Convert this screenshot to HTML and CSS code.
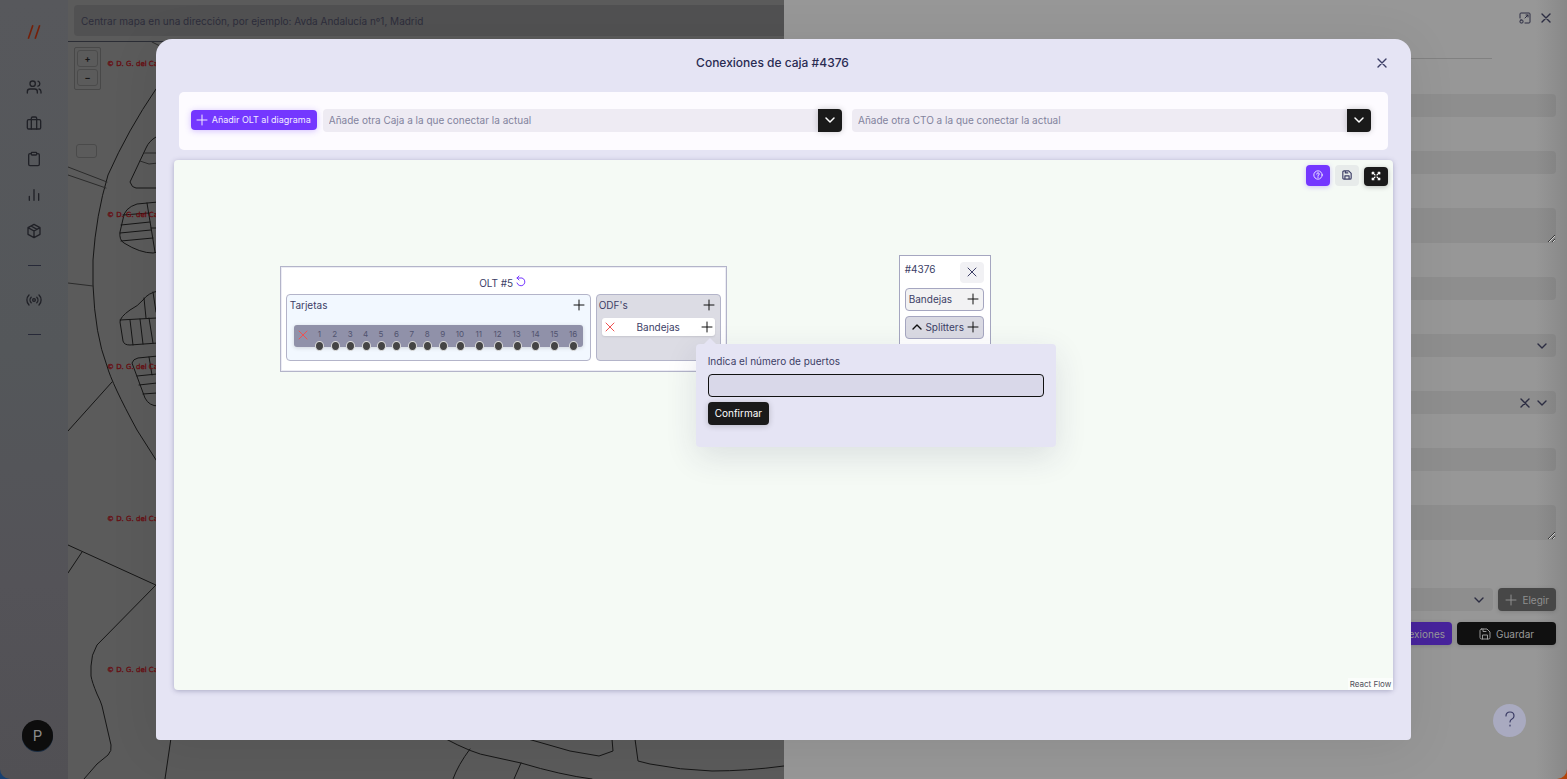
FILE: index.html
```html
<!DOCTYPE html>
<html lang="es">
<head>
<meta charset="utf-8">
<meta name="viewport" content="width=device-width, initial-scale=1">
<title>Conexiones de caja #4376</title>
<link rel="stylesheet" href="styles.css">
</head>
<body>
<svg class="sprite" aria-hidden="true">
  <symbol id="plus" viewBox="0 0 12 12"><path d="M6 1v10M1 6h10"/></symbol>
  <symbol id="cross" viewBox="0 0 12 12"><path d="M2 2l8 8M10 2l-8 8"/></symbol>
  <symbol id="down" viewBox="0 0 12 12"><path d="M2 4l4 4 4-4"/></symbol>
  <symbol id="up" viewBox="0 0 12 12"><path d="M2 8l4-4 4 4"/></symbol>
  <symbol id="save" viewBox="0 0 12 12"><path d="M2.500 1h5.500L11 4v5.500Q11 11 9.500 11h-7Q1 11 1 9.500v-7Q1 1 2.500 1zM3.500 11V7h5v4M4 1v2.500h3"/></symbol>
</svg>

<div class="app">
  <nav class="sidebar" aria-label="Principal">
    <a class="logo" href="#" aria-label="Inicio"><svg viewBox="0 0 14 14"><path d="M6 1L2 13M12 1L8 13"/></svg></a>
    <a class="nav-link" href="#" aria-label="Clientes"><svg viewBox="0 0 24 24"><circle cx="10" cy="7" r="4"/><path d="M2 21v-2q0-4 4-4h7q4 0 4 4v2M18 3.200a4 4 0 0 1 0 7.600M22.500 21v-2q0-3-3-4"/></svg></a>
    <a class="nav-link" href="#" aria-label="Trabajos"><svg viewBox="0 0 24 24"><rect x="2" y="7" width="20" height="14" rx="2"/><path d="M8 21V5q0-2 2-2h4q2 0 2 2v16"/></svg></a>
    <a class="nav-link" href="#" aria-label="Tareas"><svg viewBox="0 0 24 24"><path d="M8 4H6Q4 4 4 6v14q0 2 2 2h12q2 0 2-2V6q0-2-2-2h-2"/><rect x="8" y="2" width="8" height="4" rx="1"/></svg></a>
    <a class="nav-link" href="#" aria-label="Estadísticas"><svg viewBox="0 0 24 24"><path d="M5 20v-6M12 20V4M19 20V10"/></svg></a>
    <a class="nav-link" href="#" aria-label="Almacén"><svg viewBox="0 0 24 24"><path d="M12 2l9 5v10l-9 5-9-5V7zM3 7l9 5 9-5M12 12v10M7.500 4.500l9 5"/></svg></a>
    <hr class="nav-rule">
    <a class="nav-link" href="#" aria-label="Red"><svg viewBox="0 0 24 24"><circle cx="12" cy="12" r="2"/><path d="M16.200 7.800a6 6 0 0 1 0 8.400M7.800 16.200a6 6 0 0 1 0-8.400M19.500 4.500a10.500 10.500 0 0 1 0 15M4.500 19.500a10.500 10.500 0 0 1 0-15"/></svg></a>
    <hr class="nav-rule">
    <button class="avatar" type="button">P</button>
  </nav>

  <section class="map">
    <div class="map-search"><input class="map-input" type="text" aria-label="Centrar mapa" placeholder="Centrar mapa en una dirección, por ejemplo: Avda Andalucía nº1, Madrid"></div>
    <div class="map-view">
      <svg class="map-art" viewBox="68 42 716 737" preserveAspectRatio="xMinYMin slice" aria-hidden="true">
        <g class="roads">
          <path d="M156 89Q128 130 108 175Q96 215 93 260V285Q95 335 107 366Q112 384 137 430L158 463"/>
          <path class="faint" d="M68 167l39 15M68 175l38 13M68 283l25 3M152 42l8 4"/>
          <path d="M156 137Q149 141 146 148L130 182Q132 188 136 188H158"/>
          <path class="faint" d="M144 153h14M140 161l9 3 9-1"/>
          <path d="M158 202L137 204Q124 208 123 219L120 232Q119 240 124 243Q140 253 153 253L158 252M147 203l8 49M121 225l29-3M120 233l31-3M121 241l32-3M123 215l26-2M151 228h6"/>
          <path d="M158 291Q148 293 143 300Q138 306 130 310Q120 317 120 322L123 341Q124 345 130 345L158 343M120 320l37-2M130 320l3 25M140 319l3 25M149 318l4 25M144 298l2 20M153 292l3 20"/>
          <path d="M158 356L138 358Q133 359 132 363L145 398Q149 406 158 406M137 376l20-2M139 385l18-2M143 394l14-1M149 357l3 18M112 382L68 431"/>
          <path d="M68 545l90 41M82 552L68 573M157 584L97 645Q91 655 91 666v10Q92 682 97 694q4 8 5 12l9 39q1 6-3 10l-11 9-13 15M171 738l-6 41"/>
          <path d="M444 738q30 16 45 18l32 7q40 12 71 16M470 749q-12 16-17 30M521 763l-7 16M528 739l42 12 29 5 14-5-1-12M635 739l3 22 12 3q30 6 62 7 35 0 72-5"/>
        </g>
        <g class="marks">
          <text x="107" y="66">© D. G. del Catastro</text>
          <text x="107" y="217">© D. G. del Catastro</text>
          <text x="107" y="369">© D. G. del Catastro</text>
          <text x="107" y="521">© D. G. del Catastro</text>
          <text x="107" y="672">© D. G. del Catastro</text>
        </g>
      </svg>
      <div class="zoom-box">
        <button class="zoom-btn" type="button" aria-label="Acercar">+</button>
        <button class="zoom-btn" type="button" aria-label="Alejar">−</button>
      </div>
      <div class="map-chip"></div>
    </div>
  </section>

  <aside class="drawer">
    <div class="drawer-head">
      <button class="icon-btn" type="button" aria-label="Expandir"><svg class="i12" viewBox="0 0 12 12"><path d="M1 6V2q0-1 1-1h8q1 0 1 1v8q0 1-1 1H6M7 3h2v2M9 3L6 6"/><rect x="1" y="8" width="3" height="3" rx="1"/></svg></button>
      <button class="icon-btn" type="button" aria-label="Cerrar panel"><svg class="i12 medium"><use href="#cross"/></svg></button>
    </div>
    <hr class="drawer-rule">
    <form class="drawer-form">
      <input class="dfield" aria-label="Nombre">
      <input class="dfield" aria-label="Dirección">
      <textarea class="dfield dfield-area" aria-label="Descripción"></textarea>
      <input class="dfield" aria-label="Referencia">
      <div class="pick"><select class="dfield" aria-label="Tipo"></select><span class="pick-icons"><svg class="i12 medium"><use href="#down"/></svg></span></div>
      <div class="pick"><select class="dfield" aria-label="Estado"></select><span class="pick-icons"><svg class="i12 medium"><use href="#cross"/></svg><svg class="i12 medium"><use href="#down"/></svg></span></div>
      <input class="dfield" aria-label="Etiqueta">
      <textarea class="dfield dfield-area" aria-label="Notas"></textarea>
      <div class="drawer-actions">
        <div class="pick-row">
          <div class="pick"><select class="dfield" aria-label="Elemento"></select><span class="pick-icons"><svg class="i12 medium"><use href="#down"/></svg></span></div>
          <button class="btn btn-grey" type="button"><svg class="i12"><use href="#plus"/></svg>Elegir</button>
        </div>
        <div class="save-row">
          <button class="btn btn-violet-dim" type="button">Conexiones</button>
          <button class="btn btn-save" type="button"><svg class="i12"><use href="#save"/></svg>Guardar</button>
        </div>
      </div>
    </form>
  </aside>
</div>

<button class="help" type="button" aria-label="Ayuda"><svg viewBox="0 0 12 16"><path d="M2 5Q2 1 6 1t4 4q0 2-2 3T6 11M6 14v1"/></svg></button>

<div class="modal" role="dialog" aria-labelledby="modal-title">
  <header class="modal-head">
    <h1 class="modal-title" id="modal-title">Conexiones de caja #4376</h1>
    <button class="icon-btn modal-close" type="button" aria-label="Cerrar"><svg class="i12 medium"><use href="#cross"/></svg></button>
  </header>

  <div class="toolbar">
    <button class="btn-olt" type="button"><svg class="i12"><use href="#plus"/></svg>Añadir OLT al diagrama</button>
    <div class="combo">
      <input class="combo-input" type="text" aria-label="Caja" placeholder="Añade otra Caja a la que conectar la actual">
      <button class="combo-btn" type="button" aria-label="Ver cajas"><svg class="i12"><use href="#down"/></svg></button>
    </div>
    <div class="combo">
      <input class="combo-input" type="text" aria-label="CTO" placeholder="Añade otra CTO a la que conectar la actual">
      <button class="combo-btn" type="button" aria-label="Ver CTO"><svg class="i12"><use href="#down"/></svg></button>
    </div>
  </div>

  <div class="canvas">
    <div class="canvas-tools">
      <button class="tool tool-help" type="button" aria-label="Ayuda del diagrama"><svg class="i10" viewBox="0 0 12 12"><circle cx="6" cy="6" r="5"/><path d="M4.500 5Q4.500 3.300 6 3.300T7.500 5Q7.500 6 6 6.500v.6M6 8.300v.7"/></svg></button>
      <button class="tool tool-save" type="button" aria-label="Guardar diagrama"><svg class="i10 medium"><use href="#save"/></svg></button>
      <button class="tool tool-full" type="button" aria-label="Pantalla completa"><svg class="i10 medium" viewBox="0 0 12 12"><path d="M4.800 4.800L2 2M7.200 4.800L10 2M4.800 7.200L2 10M7.200 7.200L10 10M1.500 3.500v-2h2M8.500 1.500h2v2M1.500 8.500v2h2M8.500 10.500h2v-2"/></svg></button>
    </div>

    <section class="node node-olt">
      <h2 class="olt-title">OLT #5 <button class="icon-btn reload" type="button" aria-label="Recargar"><svg class="i12" viewBox="0 0 12 12"><path d="M2 3h5a4 4 0 1 1-5 5M4 1L2 3l2 2"/></svg></button></h2>
      <div class="olt-body">
        <div class="group group-cards">
          <div class="group-head"><span>Tarjetas</span><button class="icon-btn" type="button" aria-label="Añadir tarjeta"><svg class="i12"><use href="#plus"/></svg></button></div>
          <div class="card-strip">
            <button class="icon-btn danger" type="button" aria-label="Quitar tarjeta"><svg class="i12"><use href="#cross"/></svg></button>
            <ol class="ports">
              <li>1</li><li>2</li><li>3</li><li>4</li><li>5</li><li>6</li><li>7</li><li>8</li><li>9</li><li>10</li><li>11</li><li>12</li><li>13</li><li>14</li><li>15</li><li>16</li>
            </ol>
          </div>
        </div>
        <div class="group group-odf">
          <div class="group-head"><span>ODF's</span><button class="icon-btn" type="button" aria-label="Añadir ODF"><svg class="i12"><use href="#plus"/></svg></button></div>
          <div class="tray">
            <button class="icon-btn danger" type="button" aria-label="Quitar ODF"><svg class="i12"><use href="#cross"/></svg></button>
            <span>Bandejas</span>
            <button class="icon-btn" type="button" aria-label="Añadir bandeja"><svg class="i12"><use href="#plus"/></svg></button>
          </div>
        </div>
      </div>
    </section>

    <section class="node node-box">
      <div class="box-head"><span>#4376</span><button class="box-close" type="button" aria-label="Quitar caja"><svg class="i12"><use href="#cross"/></svg></button></div>
      <div class="box-row"><span>Bandejas</span><button class="icon-btn" type="button" aria-label="Añadir bandeja a la caja"><svg class="i12"><use href="#plus"/></svg></button></div>
      <div class="box-row box-row-dark"><button class="icon-btn" type="button" aria-label="Plegar"><svg class="i12 medium"><use href="#up"/></svg></button><span>Splitters</span><button class="icon-btn" type="button" aria-label="Añadir splitter"><svg class="i12"><use href="#plus"/></svg></button></div>
    </section>

    <form class="popover">
      <label class="pop-label" for="ports">Indica el número de puertos</label>
      <input class="pop-input" id="ports" type="text">
      <button class="btn-confirm" type="button">Confirmar</button>
    </form>

    <a class="credit" href="#">React Flow</a>
  </div>
</div>
</body>
</html>
```
FILE: styles.css
```css
* { box-sizing: border-box; }

body {
  margin: 0;
  height: 100vh;
  overflow: hidden;
  background: linear-gradient(90deg, #173f70 50%, #b3440b 50%);
  color: #3c3e66;
  font: 10px/16px Inter, "Open Sans", sans-serif;
}

button, input, select, textarea { font: inherit; color: inherit; border: 0; margin: 0; }
button { padding: 0; background: none; }
input:focus, textarea:focus { outline: none; }
svg { fill: none; stroke: currentColor; stroke-linecap: round; stroke-linejoin: round; flex: none; }
.sprite { position: absolute; width: 0; height: 0; }
.i12 { width: 12px; height: 12px; }
.i10 { width: 10px; height: 10px; }
.medium { stroke-width: 1.400; }
.icon-btn { display: flex; align-items: center; justify-content: center; }

/* App shell */
.app {
  display: grid;
  grid-template-columns: 68px minmax(0, 1fr) 50%;
  height: 100vh;
  border-radius: 0 0 10px 10px;
  overflow: hidden;
}

.sidebar {
  display: flex;
  flex-direction: column;
  align-items: center;
  padding: 24px 0 28px;
  background: linear-gradient(#57585c, #54575a 45%, #545358 75%, #515054);
  color: #202127;
}
.logo { width: 16px; height: 16px; margin-bottom: 29px; color: #751f08; }
.logo svg { display: block; width: 16px; height: 16px; stroke-width: 1.400; stroke-linecap: butt; }
.nav-link { display: flex; align-items: center; height: 36px; color: inherit; }
.nav-link svg { width: 16px; height: 16px; stroke-width: 2; }
.nav-rule { width: 13px; height: 0; margin: 16px 0; border: 0; border-top: 1px solid #272938; }
.avatar {
  width: 31px;
  height: 31px;
  margin: auto 0 0 7px;
  border-radius: 50%;
  background: #0d0d0d;
  box-shadow: 0 1px 0 #1b2d42;
  color: #8b8b8b;
  font-size: 15px;
}

/* Map */
.map { display: flex; flex-direction: column; background: #5b5b5b; }
.map-search { padding: 5px 0 5px 6px; border-bottom: 1px solid #2b2d35; }
.map-input { display: block; width: 100%; height: 31px; padding: 0 7px; border-radius: 4px 0 0 4px; background: #515152; }
.map-input::placeholder { color: #2d2d3b; opacity: 1; }
.map-view { position: relative; flex: 1; overflow: hidden; }
.map-art { position: absolute; top: 0; left: 0; width: 100%; height: 100%; }
.roads path { stroke: #161616; stroke-width: 1; }
.roads .faint { stroke: #2b2b2b; }
.marks text { fill: #680b10; stroke: #680b10; stroke-width: .3; font: 7px "DejaVu Sans", sans-serif; }
.zoom-box {
  position: absolute;
  top: 5px;
  left: 6px;
  display: grid;
  gap: 2px;
  padding: 2px 2px 3px;
  border: 1px solid #484848;
  border-radius: 2px;
}
.zoom-btn { width: 21px; height: 17px; border: 1px solid #4b4b4b; border-radius: 3px; color: #161616; font: bold 9px/13px Inter, sans-serif; }
.map-chip { position: absolute; top: 102px; left: 8px; width: 21px; height: 14px; border: 1px solid #4a4a4a; border-radius: 3px; }

/* Side drawer */
.drawer { padding: 12px 11px; background: linear-gradient(90deg, #979797 96%, #888); color: #2c2d42; }
.drawer-head { display: flex; justify-content: flex-end; gap: 9px; padding: 0 4px; }
.drawer-rule { margin: 34px 64px 35px 0; border: 0; border-top: 1px solid #818181; }
.drawer-form { display: grid; gap: 34px; }
.dfield { display: block; width: 100%; height: 23px; padding: 0 7px; border-radius: 4px; background: rgba(0, 0, 0, .06); appearance: none; }
.dfield-area { height: 35px; }
.pick { position: relative; flex: 1; }
.pick-icons { position: absolute; top: 6px; right: 8px; display: flex; gap: 5px; pointer-events: none; }
.drawer-actions { display: grid; gap: 11px; padding-top: 14px; }
.pick-row, .save-row { display: flex; gap: 5px; justify-content: flex-end; }
.btn { display: flex; align-items: center; justify-content: center; gap: 5px; height: 23px; padding: 0 7px; border-radius: 4px; color: #999; box-shadow: 0 1px 4px rgba(0, 0, 0, .15); }
.btn-grey { background: #474747; color: #8f8f8f; }
.btn-violet-dim { background: #47239c; }
.btn-save { width: 99px; background: #101010; }
.help {
  position: absolute;
  right: 41px;
  bottom: 42px;
  width: 33px;
  height: 33px;
  border-radius: 50%;
  background: #a9aac0;
  color: #3a3b64;
}
.help svg { width: 12px; height: 16px; stroke-width: 1.200; }

/* Modal */
.modal {
  position: absolute;
  inset: 5% calc(10% - 1px);
  display: flex;
  flex-direction: column;
  padding: 0 18px 50px;
  border-radius: 16px 16px 4px 4px;
  background: #e5e4f4;
  box-shadow: 0 6px 50px rgba(0, 0, 0, .08);
}
.modal-head { display: grid; grid-template-columns: 1fr 22px; align-items: center; height: 48px; }
.modal-title { margin: 0; text-align: center; font-size: 12px; font-weight: 500; color: #292b52; }

.toolbar {
  display: flex;
  align-items: center;
  gap: 10px;
  margin: 5px 5px 10px;
  padding: 17px 17px 18px 12px;
  border-radius: 5px;
  background: #fdfbff;
}
.btn-olt {
  display: flex;
  align-items: center;
  gap: 4px;
  height: 20px;
  margin-right: -4px;
  padding: 0 6px 0 5px;
  border-radius: 4px;
  background: #7437ff;
  box-shadow: 0 1px 6px rgba(116, 55, 255, .3);
  color: #f2ecff;
  font-size: 9px;
}
.combo { display: flex; flex: 1; height: 23px; }
.combo-input { flex: 1; min-width: 0; padding: 0 6px; border-radius: 4px 0 0 4px; background: #eeebf3; }
.combo-input::placeholder { color: #82839d; opacity: 1; }
.combo-btn { display: grid; place-items: center; width: 24px; border-radius: 0 4px 4px 0; background: #1a1a1a; color: #fff; box-shadow: 0 0 6px rgba(0, 0, 0, .2); }
.combo-btn svg { stroke-width: 1.500; }

/* Diagram canvas */
.canvas {
  position: relative;
  flex: 1;
  border-radius: 4px;
  background: #f5faf5;
  box-shadow: 0 1px 5px rgba(60, 60, 110, .35);
}
.canvas-tools { position: absolute; top: 5px; right: 5px; display: flex; align-items: flex-end; gap: 5px; }
.tool { display: grid; place-items: center; width: 24px; height: 21px; border-radius: 4px; }
.tool-help { background: #7437ff; color: #fff; box-shadow: 0 1px 5px rgba(116, 55, 255, .3); }
.tool-save { background: #e7ebea; }
.tool-full { height: 19px; background: #1a1a1a; color: #fff; box-shadow: 0 1px 5px rgba(0, 0, 0, .25); }

.node { position: absolute; border: 1px solid #b3b4c9; background: #fff; }
.node .icon-btn { color: #111; }
.node .danger { color: #f05252; }
.node-olt { top: 106px; left: 106px; width: 447px; padding: 0 5px 10px; box-shadow: inset 0 0 0 1px #ececf4; }
.olt-title { display: flex; justify-content: center; gap: 2px; height: 27px; margin: 0; padding-top: 8px; font-size: 10px; font-weight: 400; }
.node .reload { height: 12px; color: #7437ff; }
.olt-body { display: grid; grid-template-columns: 305px 1fr; gap: 5px; }
.group { min-height: 67px; border: 1px solid #b3b4c9; border-radius: 4px; }
.group-cards { background: #f2f8ff; padding: 2px 7px; }
.group-odf { background: #dcdce4; padding: 2px 5px; }
.group-head { display: flex; justify-content: space-between; margin: 0 -2px 0 -4px; }
.group-odf .group-head { margin: 0 0 0 -3px; }
.card-strip { display: flex; height: 22px; margin-top: 12px; border-radius: 3px; background: #9091a9; box-shadow: 0 1px 4px rgba(0, 0, 0, .15); }
.card-strip .danger { width: 18px; height: 20px; }
.ports { display: grid; grid-template-columns: repeat(9, 31fr) repeat(7, 38fr); flex: 1; margin: 0; padding: 0; list-style: none; color: #51536f; font-size: 8px; line-height: 19px; text-align: center; }
.ports li { position: relative; }
.ports li::after {
  content: "";
  position: absolute;
  top: 16px;
  left: calc(50% - 4px);
  width: 7px;
  height: 8px;
  border: 1px solid #ddd;
  border-radius: 50%;
  background: #444;
}
.tray { display: flex; align-items: center; justify-content: space-between; height: 18px; margin-top: 5px; padding: 0 2px; border-radius: 3px; background: #fff; box-shadow: 0 1px 2px rgba(0, 0, 0, .1); }

.node-box { top: 95px; left: 725px; display: grid; gap: 5px; width: 92px; padding: 5px 6px 16px 5px; border-color: #a5a6c0; }
.box-head { display: flex; justify-content: space-between; height: 22px; }
.box-close { display: grid; place-items: center; align-self: flex-end; width: 24px; height: 21px; border-radius: 4px; background: #f1f1f4; }
.box-row { display: flex; align-items: center; justify-content: space-between; height: 23px; padding: 0 4px 0 3px; border: 1px solid #a5a6c0; border-radius: 4px; background: #f2f2f3; }
.box-row-dark { padding-left: 5px; background: #dadae3; }

.popover {
  position: absolute;
  top: 184px;
  left: 522px;
  display: grid;
  gap: 5px;
  justify-items: start;
  width: 360px;
  padding: 10px 12px 22px;
  border-radius: 4px;
  background: #e5e4f4;
  box-shadow: 0 10px 32px rgba(40, 40, 80, .12);
}
.popover::before {
  content: "";
  position: absolute;
  top: -6px;
  left: 8px;
  border: 6px solid transparent;
  border-top: 0;
  border-bottom-color: #e5e4f4;
}
.pop-label { line-height: 15px; }
.pop-input { width: 100%; height: 23px; padding: 0 6px; border: 1px solid #111; border-radius: 4px; background: #d9d8e9; }
.btn-confirm { height: 23px; padding: 0 7px; border-radius: 4px; background: #1a1a1a; color: #fff; box-shadow: 0 1px 6px rgba(0, 0, 0, .2); }
.credit { position: absolute; right: 0; bottom: 0; padding: 0 2px; background: #fbfdfb; color: #50505a; font-size: 8px; line-height: 12px; text-decoration: none; }
```
